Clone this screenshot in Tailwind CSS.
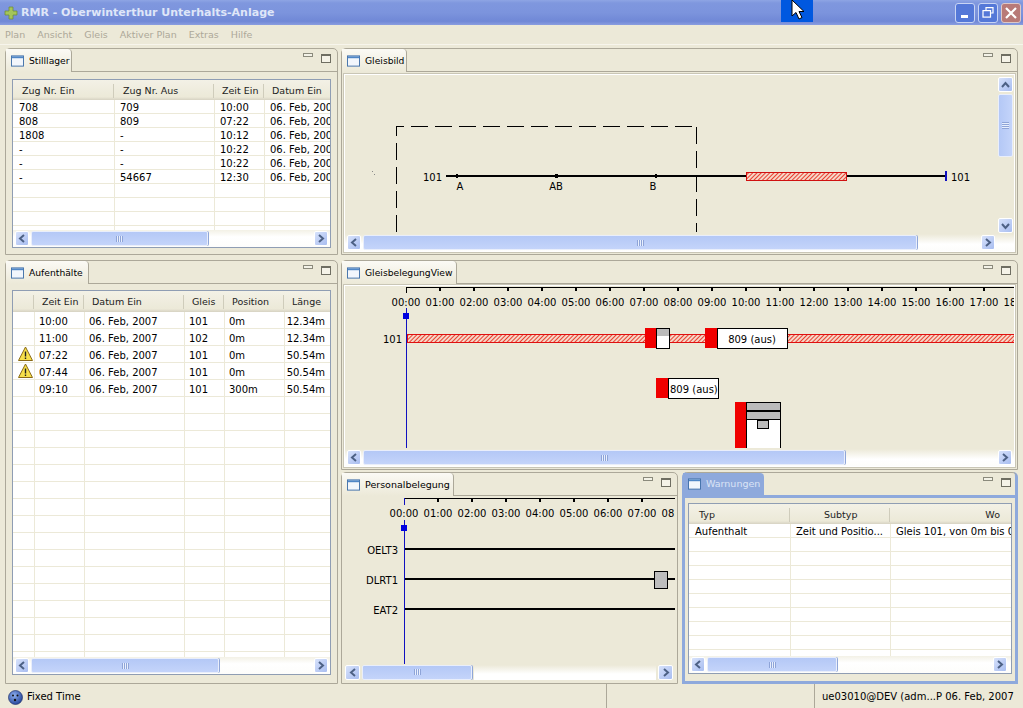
<!DOCTYPE html>
<html>
<head>
<meta charset="utf-8">
<script src="https://cdn.jsdelivr.net/npm/@tailwindcss/browser@4"></script>
</head>
<body class="m-0">
<div class="relative w-[1023px] h-[708px] overflow-hidden flex flex-col bg-[#ece9d8] text-black text-[10px] leading-[14px] font-['DejaVu_Sans',sans-serif]">

  <!-- Title bar -->
  <div class="h-[25px] shrink-0 flex items-center pl-[4px] pr-[2px] bg-[linear-gradient(180deg,#8ea5e4_0%,#7f97de_12%,#7c94dd_50%,#7088d6_85%,#8a9de0_100%)]">
    <svg class="w-[14px] h-[14px] shrink-0" viewBox="0 0 14 14"><path d="M5 1h4v4h4v4H9v4H5V9H1V5h4z" fill="#a4c45a" stroke="#6b8a30" stroke-width=".7"/></svg>
    <span class="ml-[3px] text-[11px] font-bold text-[#dfe6f8] whitespace-nowrap">RMR - Oberwinterthur Unterhalts-Anlage</span>
    <div class="ml-auto flex gap-[3px]">
      <div class="w-[20px] h-[20px] rounded-[3px] border border-[#c8d4f4] bg-[#5478d8] flex items-end pl-[5px] pb-[4px]"><div class="w-[7px] h-[3px] bg-white"></div></div>
      <div class="w-[20px] h-[20px] rounded-[3px] border border-[#c8d4f4] bg-[#5478d8]"><svg class="w-full h-full" viewBox="0 0 18 18" fill="none" stroke="#fff" stroke-width="1.2"><path d="M7 6V3.6h7V9h-2"/><rect x="4" y="6.6" width="7.5" height="6.5"/></svg></div>
      <div class="w-[20px] h-[20px] rounded-[3px] border border-[#dcc8c8] bg-[#b87a78]"><svg class="w-full h-full" viewBox="0 0 18 18" stroke="#fff" stroke-width="2.2"><path d="M4 4l10 10M14 4L4 14"/></svg></div>
    </div>
  </div>

  <!-- Menu bar -->
  <div class="h-[20px] shrink-0 flex items-center gap-[12px] pl-[5px] text-[9.5px] text-[#aca899] border-b border-[#f7f5ec]">
    <span>Plan</span><span>Ansicht</span><span>Gleis</span><span>Aktiver Plan</span><span>Extras</span><span>Hilfe</span>
  </div>

  <!-- Workbench -->
  <div class="h-[636px] shrink-0 mt-[3px] ml-[5px] flex gap-[3px]">

    <!-- Left column -->
    <div class="w-[333px] flex flex-col gap-[5px]">

      <!-- Stillager -->
      <section class="h-[207px] flex flex-col border border-[#aca899] rounded-t-[5px]">
        <div class="h-[23px] shrink-0 flex items-stretch border-b border-[#aca899]">
          <div class="w-[66px] -mb-px flex items-center gap-[5px] pl-[5px] text-[9.2px] rounded-tr-[4px] border-r border-[#aca899] bg-[linear-gradient(180deg,#fbfaf5,#ece9d8)]">
            <svg class="w-[13px] h-[14px] shrink-0" viewBox="0 0 14 14"><rect x=".5" y="1.5" width="13" height="11" fill="#f2f6fc" stroke="#3f6ea8"/><rect x="1" y="2" width="12" height="2" fill="#4f86c6"/></svg>
            <span>Stilllager</span>
          </div>
          <div class="ml-auto flex items-start gap-[8px] pt-[4px] pr-[6px]">
            <div class="w-[10px] h-[4px] border border-[#8b8a7c] bg-white/40"></div>
            <div class="w-[10px] h-[9px] mt-[1px] border border-[#6f6e62] border-t-[2px] bg-[#f5f3e8]"></div>
          </div>
        </div>
        <div class="flex-1 pt-[7px] px-[6px] pb-[6px] min-h-0">
          <div class="h-full flex flex-col border border-[#8f9db3] bg-white overflow-hidden">
            <div class="h-[20px] shrink-0 flex text-[9.5px] bg-[linear-gradient(180deg,#f3f1e6,#ece9d8_85%,#d6d2c2)] text-[#222]">
              <div class="w-[101px] pl-[9px] pt-[4px]"><span class="block border-r border-[#cfccbb] h-[14px]">Zug Nr. Ein</span></div>
              <div class="w-[100px] pl-[9px] pt-[4px]"><span class="block border-r border-[#cfccbb] h-[14px]">Zug Nr. Aus</span></div>
              <div class="w-[50px] pl-[8px] pt-[4px]"><span class="block border-r border-[#cfccbb] h-[14px] whitespace-nowrap overflow-hidden">Zeit Ein</span></div>
              <div class="flex-1 pl-[8px] pt-[4px] whitespace-nowrap overflow-hidden">Datum Ein</div>
            </div>
            <div class="flex h-[14px] shrink-0 leading-[16px] border-b border-[#ece9d8]"><div class="w-[102px] pl-[6px] border-r border-[#ece9d8]">708</div><div class="w-[100px] pl-[5px] border-r border-[#ece9d8]">709</div><div class="w-[50px] pl-[5px] border-r border-[#ece9d8]">10:00</div><div class="flex-1 pl-[5px] overflow-hidden whitespace-nowrap">06. Feb, 2007</div></div>
            <div class="flex h-[14px] shrink-0 leading-[16px] border-b border-[#ece9d8]"><div class="w-[102px] pl-[6px] border-r border-[#ece9d8]">808</div><div class="w-[100px] pl-[5px] border-r border-[#ece9d8]">809</div><div class="w-[50px] pl-[5px] border-r border-[#ece9d8]">07:22</div><div class="flex-1 pl-[5px] overflow-hidden whitespace-nowrap">06. Feb, 2007</div></div>
            <div class="flex h-[14px] shrink-0 leading-[16px] border-b border-[#ece9d8]"><div class="w-[102px] pl-[6px] border-r border-[#ece9d8]">1808</div><div class="w-[100px] pl-[5px] border-r border-[#ece9d8]">-</div><div class="w-[50px] pl-[5px] border-r border-[#ece9d8]">10:12</div><div class="flex-1 pl-[5px] overflow-hidden whitespace-nowrap">06. Feb, 2007</div></div>
            <div class="flex h-[14px] shrink-0 leading-[16px] border-b border-[#ece9d8]"><div class="w-[102px] pl-[6px] border-r border-[#ece9d8]">-</div><div class="w-[100px] pl-[5px] border-r border-[#ece9d8]">-</div><div class="w-[50px] pl-[5px] border-r border-[#ece9d8]">10:22</div><div class="flex-1 pl-[5px] overflow-hidden whitespace-nowrap">06. Feb, 2007</div></div>
            <div class="flex h-[14px] shrink-0 leading-[16px] border-b border-[#ece9d8]"><div class="w-[102px] pl-[6px] border-r border-[#ece9d8]">-</div><div class="w-[100px] pl-[5px] border-r border-[#ece9d8]">-</div><div class="w-[50px] pl-[5px] border-r border-[#ece9d8]">10:22</div><div class="flex-1 pl-[5px] overflow-hidden whitespace-nowrap">06. Feb, 2007</div></div>
            <div class="flex h-[14px] shrink-0 leading-[16px] border-b border-[#ece9d8]"><div class="w-[102px] pl-[6px] border-r border-[#ece9d8]">-</div><div class="w-[100px] pl-[5px] border-r border-[#ece9d8]">54667</div><div class="w-[50px] pl-[5px] border-r border-[#ece9d8]">12:30</div><div class="flex-1 pl-[5px] overflow-hidden whitespace-nowrap">06. Feb, 2007</div></div>
            <div class="flex-1 min-h-0 flex bg-[repeating-linear-gradient(180deg,#fff_0,#fff_13px,#ece9d8_13px,#ece9d8_14px)]"><div class="w-[102px] border-r border-[#ece9d8]"></div><div class="w-[100px] border-r border-[#ece9d8]"></div><div class="w-[50px] border-r border-[#ece9d8]"></div></div>
            <!-- scrollbar -->
            <div class="h-[17px] shrink-0 flex items-center gap-[2px] px-[2px] bg-[linear-gradient(180deg,#f3f1e6,#fff_40%,#fdfdfb)]">
              <div class="w-[14px] h-[15px] rounded-[2px] border border-white bg-[linear-gradient(135deg,#d7e2fb,#a8bdf0)] flex items-center justify-center"><svg class="w-[8px] h-[9px]" viewBox="0 0 8 9" fill="none" stroke="#4d6185" stroke-width="2"><path d="M6 1L2 4.5 6 8"/></svg></div>
              <div class="w-[177px] h-[15px] rounded-[2px] border border-[#e9eefb] bg-[linear-gradient(180deg,#b4c8f6,#c4d4fa)] shadow-[1px_0_0_#8fa6d8] flex items-center justify-center"><div class="w-[7px] h-[6px] bg-[repeating-linear-gradient(90deg,#8ea4d8_0,#8ea4d8_1px,#e8effd_1px,#e8effd_2px)]"></div></div>
              <div class="flex-1"></div>
              <div class="w-[14px] h-[15px] rounded-[2px] border border-white bg-[linear-gradient(135deg,#d7e2fb,#a8bdf0)] flex items-center justify-center"><svg class="w-[8px] h-[9px]" viewBox="0 0 8 9" fill="none" stroke="#4d6185" stroke-width="2"><path d="M2 1l4 3.5L2 8"/></svg></div>
            </div>
          </div>
        </div>
      </section>

      <!-- Aufenthalte -->
      <section class="flex-1 min-h-0 flex flex-col border border-[#aca899] rounded-t-[5px]">
        <div class="h-[23px] shrink-0 flex items-stretch border-b border-[#aca899]">
          <div class="w-[83px] -mb-px flex items-center gap-[5px] pl-[5px] text-[9.2px] rounded-tr-[4px] border-r border-[#aca899] bg-[linear-gradient(180deg,#fbfaf5,#ece9d8)]">
            <svg class="w-[13px] h-[14px] shrink-0" viewBox="0 0 14 14"><rect x=".5" y="1.5" width="13" height="11" fill="#f2f6fc" stroke="#3f6ea8"/><rect x="1" y="2" width="12" height="2" fill="#4f86c6"/></svg>
            <span>Aufenthälte</span>
          </div>
          <div class="ml-auto flex items-start gap-[8px] pt-[4px] pr-[6px]">
            <div class="w-[10px] h-[4px] border border-[#8b8a7c] bg-white/40"></div>
            <div class="w-[10px] h-[9px] mt-[1px] border border-[#6f6e62] border-t-[2px] bg-[#f5f3e8]"></div>
          </div>
        </div>
        <div class="flex-1 pt-[6px] px-[6px] pb-[8px] min-h-0">
          <div class="h-full flex flex-col border border-[#8f9db3] bg-white overflow-hidden">
            <div class="h-[21px] shrink-0 flex text-[9.5px] bg-[linear-gradient(180deg,#f3f1e6,#ece9d8_85%,#d6d2c2)] text-[#222]">
              <div class="w-[21px] pt-[4px]"><span class="block border-r border-[#cfccbb] h-[14px]"></span></div>
              <div class="w-[50px] pl-[8px] pt-[4px]"><span class="block border-r border-[#cfccbb] h-[14px] whitespace-nowrap overflow-hidden">Zeit Ein</span></div>
              <div class="w-[100px] pl-[8px] pt-[4px]"><span class="block border-r border-[#cfccbb] h-[14px]">Datum Ein</span></div>
              <div class="w-[40px] pl-[8px] pt-[4px]"><span class="block border-r border-[#cfccbb] h-[14px]">Gleis</span></div>
              <div class="w-[60px] pl-[8px] pt-[4px]"><span class="block border-r border-[#cfccbb] h-[14px]">Position</span></div>
              <div class="flex-1 pl-[8px] pt-[4px]">Länge</div>
            </div>
            <div class="flex h-[17px] shrink-0 leading-[20px] border-b border-[#ece9d8]"><div class="w-[22px] border-r border-[#ece9d8]"></div><div class="w-[50px] pl-[4px] border-r border-[#ece9d8]">10:00</div><div class="w-[100px] pl-[4px] border-r border-[#ece9d8]">06. Feb, 2007</div><div class="w-[40px] pl-[4px] border-r border-[#ece9d8]">101</div><div class="w-[60px] pl-[4px] border-r border-[#ece9d8]">0m</div><div class="flex-1 text-right pr-[5px]">12.34m</div></div>
            <div class="flex h-[17px] shrink-0 leading-[20px] border-b border-[#ece9d8]"><div class="w-[22px] border-r border-[#ece9d8]"></div><div class="w-[50px] pl-[4px] border-r border-[#ece9d8]">11:00</div><div class="w-[100px] pl-[4px] border-r border-[#ece9d8]">06. Feb, 2007</div><div class="w-[40px] pl-[4px] border-r border-[#ece9d8]">102</div><div class="w-[60px] pl-[4px] border-r border-[#ece9d8]">0m</div><div class="flex-1 text-right pr-[5px]">12.34m</div></div>
            <div class="flex h-[17px] shrink-0 leading-[20px] border-b border-[#ece9d8]"><div class="w-[22px] border-r border-[#ece9d8] pl-[4px]"><svg class="w-[17px] h-[16px]" viewBox="0 0 16 16"><path d="M8 1l7 13.5H1z" fill="#f7e04a" stroke="#8a6a18"/><path d="M8 5.5v5M8 11.5v1.6" stroke="#222" stroke-width="1.4"/></svg></div><div class="w-[50px] pl-[4px] border-r border-[#ece9d8]">07:22</div><div class="w-[100px] pl-[4px] border-r border-[#ece9d8]">06. Feb, 2007</div><div class="w-[40px] pl-[4px] border-r border-[#ece9d8]">101</div><div class="w-[60px] pl-[4px] border-r border-[#ece9d8]">0m</div><div class="flex-1 text-right pr-[5px]">50.54m</div></div>
            <div class="flex h-[17px] shrink-0 leading-[20px] border-b border-[#ece9d8]"><div class="w-[22px] border-r border-[#ece9d8] pl-[4px]"><svg class="w-[17px] h-[16px]" viewBox="0 0 16 16"><path d="M8 1l7 13.5H1z" fill="#f7e04a" stroke="#8a6a18"/><path d="M8 5.5v5M8 11.5v1.6" stroke="#222" stroke-width="1.4"/></svg></div><div class="w-[50px] pl-[4px] border-r border-[#ece9d8]">07:44</div><div class="w-[100px] pl-[4px] border-r border-[#ece9d8]">06. Feb, 2007</div><div class="w-[40px] pl-[4px] border-r border-[#ece9d8]">101</div><div class="w-[60px] pl-[4px] border-r border-[#ece9d8]">0m</div><div class="flex-1 text-right pr-[5px]">50.54m</div></div>
            <div class="flex h-[17px] shrink-0 leading-[20px] border-b border-[#ece9d8]"><div class="w-[22px] border-r border-[#ece9d8]"></div><div class="w-[50px] pl-[4px] border-r border-[#ece9d8]">09:10</div><div class="w-[100px] pl-[4px] border-r border-[#ece9d8]">06. Feb, 2007</div><div class="w-[40px] pl-[4px] border-r border-[#ece9d8]">101</div><div class="w-[60px] pl-[4px] border-r border-[#ece9d8]">300m</div><div class="flex-1 text-right pr-[5px]">50.54m</div></div>
            <div class="flex-1 min-h-0 flex bg-[repeating-linear-gradient(180deg,#fff_0,#fff_16px,#ece9d8_16px,#ece9d8_17px)]"><div class="w-[22px] border-r border-[#ece9d8]"></div><div class="w-[50px] border-r border-[#ece9d8]"></div><div class="w-[100px] border-r border-[#ece9d8]"></div><div class="w-[40px] border-r border-[#ece9d8]"></div><div class="w-[60px] border-r border-[#ece9d8]"></div></div>
            <div class="h-[17px] shrink-0 flex items-center gap-[2px] px-[2px] bg-[linear-gradient(180deg,#f3f1e6,#fff_40%,#fdfdfb)]">
              <div class="w-[14px] h-[15px] rounded-[2px] border border-white bg-[linear-gradient(135deg,#d7e2fb,#a8bdf0)] flex items-center justify-center"><svg class="w-[8px] h-[9px]" viewBox="0 0 8 9" fill="none" stroke="#4d6185" stroke-width="2"><path d="M6 1L2 4.5 6 8"/></svg></div>
              <div class="w-[188px] h-[15px] rounded-[2px] border border-[#e9eefb] bg-[linear-gradient(180deg,#b4c8f6,#c4d4fa)] shadow-[1px_0_0_#8fa6d8] flex items-center justify-center"><div class="w-[7px] h-[6px] bg-[repeating-linear-gradient(90deg,#8ea4d8_0,#8ea4d8_1px,#e8effd_1px,#e8effd_2px)]"></div></div>
              <div class="flex-1"></div>
              <div class="w-[14px] h-[15px] rounded-[2px] border border-white bg-[linear-gradient(135deg,#d7e2fb,#a8bdf0)] flex items-center justify-center"><svg class="w-[8px] h-[9px]" viewBox="0 0 8 9" fill="none" stroke="#4d6185" stroke-width="2"><path d="M2 1l4 3.5L2 8"/></svg></div>
            </div>
          </div>
        </div>
      </section>
    </div>

    <!-- Right column -->
    <div class="w-[677px] flex flex-col">

      <!-- Gleisbild -->
      <section class="h-[207px] shrink-0 flex flex-col border border-[#aca899] rounded-t-[5px]">
        <div class="h-[23px] shrink-0 flex items-stretch border-b border-[#aca899]">
          <div class="w-[65px] -mb-px flex items-center gap-[5px] pl-[5px] text-[9.2px] rounded-tr-[4px] border-r border-[#aca899] bg-[linear-gradient(180deg,#fbfaf5,#ece9d8)]">
            <svg class="w-[13px] h-[14px] shrink-0" viewBox="0 0 14 14"><rect x=".5" y="1.5" width="13" height="11" fill="#f2f6fc" stroke="#3f6ea8"/><rect x="1" y="2" width="12" height="2" fill="#4f86c6"/></svg>
            <span>Gleisbild</span>
          </div>
          <div class="ml-auto flex items-start gap-[8px] pt-[4px] pr-[6px]">
            <div class="w-[10px] h-[4px] border border-[#8b8a7c] bg-white/40"></div>
            <div class="w-[10px] h-[9px] mt-[1px] border border-[#6f6e62] border-t-[2px] bg-[#f5f3e8]"></div>
          </div>
        </div>
        <div class="flex-1 min-h-0 p-[2px]">
          <div class="h-full flex flex-col border border-white shadow-[0_0_0_1px_#c9c6b6]">
            <div class="flex-1 min-h-0 flex">
              <svg class="w-[651px] h-[159px] shrink-0" viewBox="345 75 651 159" shape-rendering="crispEdges" font-family="DejaVu Sans" font-size="10" fill="#000">
                <defs><pattern id="h1" width="3" height="3" patternUnits="userSpaceOnUse" patternTransform="rotate(45)"><rect width="3" height="3" fill="#f6d7c8"/><rect width="1" height="3" fill="#e84030"/></pattern></defs>
                <path d="M396.5 232V126.5H697M696.5 126.5V232" fill="none" stroke="#000" stroke-dasharray="17 7"/>
                <rect x="446" y="175" width="500" height="2"/>
                <rect x="746.5" y="172.5" width="100" height="8" fill="url(#h1)" stroke="#d01010"/>
                <rect x="945" y="171" width="2" height="10" fill="#1010c0"/>
                <rect x="456" y="174" width="2" height="4"/><rect x="555" y="174" width="3" height="4"/><rect x="655" y="174" width="2" height="4"/>
                <rect x="372" y="171" width="1" height="1" fill="#888"/><rect x="374" y="174" width="1" height="1" fill="#888"/>
                <text x="423" y="181">101</text><text x="951" y="181">101</text>
                <text x="460" y="190" text-anchor="middle">A</text><text x="556" y="190" text-anchor="middle">AB</text><text x="653" y="190" text-anchor="middle">B</text>
              </svg>
              <div class="w-[18px] shrink-0 flex flex-col items-center gap-[2px] pt-[2px] pb-[1px]">
                <div class="w-[15px] h-[15px] rounded-[2px] border border-white bg-[linear-gradient(135deg,#d7e2fb,#a8bdf0)] flex items-center justify-center"><svg class="w-[9px] h-[8px]" viewBox="0 0 9 8" fill="none" stroke="#4d6185" stroke-width="2"><path d="M1 6l3.5-4L8 6"/></svg></div>
                <div class="w-[15px] h-[63px] rounded-[2px] border border-[#e9eefb] bg-[linear-gradient(90deg,#b4c8f6,#c4d4fa)] flex items-center justify-center"><div class="w-[7px] h-[7px] bg-[repeating-linear-gradient(180deg,#8ea4d8_0,#8ea4d8_1px,#e8effd_1px,#e8effd_2px)]"></div></div>
                <div class="flex-1"></div>
                <div class="w-[15px] h-[15px] rounded-[2px] border border-white bg-[linear-gradient(135deg,#d7e2fb,#a8bdf0)] flex items-center justify-center"><svg class="w-[9px] h-[8px]" viewBox="0 0 9 8" fill="none" stroke="#4d6185" stroke-width="2"><path d="M1 2l3.5 4L8 2"/></svg></div>
              </div>
            </div>
            <div class="h-[17px] shrink-0 flex items-center gap-[2px] px-[2px] bg-[linear-gradient(180deg,#ece9d8,#fff_60%,#fdfdfb)]">
              <div class="w-[14px] h-[15px] rounded-[2px] border border-white bg-[linear-gradient(135deg,#d7e2fb,#a8bdf0)] flex items-center justify-center"><svg class="w-[8px] h-[9px]" viewBox="0 0 8 9" fill="none" stroke="#4d6185" stroke-width="2"><path d="M6 1L2 4.5 6 8"/></svg></div>
              <div class="w-[554px] h-[15px] rounded-[2px] border border-[#e9eefb] bg-[linear-gradient(180deg,#b4c8f6,#c4d4fa)] shadow-[1px_0_0_#8fa6d8] flex items-center justify-center"><div class="w-[7px] h-[6px] bg-[repeating-linear-gradient(90deg,#8ea4d8_0,#8ea4d8_1px,#e8effd_1px,#e8effd_2px)]"></div></div>
              <div class="flex-1"></div>
              <div class="w-[14px] h-[15px] mr-[17px] rounded-[2px] border border-white bg-[linear-gradient(135deg,#d7e2fb,#a8bdf0)] flex items-center justify-center"><svg class="w-[8px] h-[9px]" viewBox="0 0 8 9" fill="none" stroke="#4d6185" stroke-width="2"><path d="M2 1l4 3.5L2 8"/></svg></div>
            </div>
          </div>
        </div>
      </section>

      <!-- GleisbelegungView -->
      <section class="h-[210px] shrink-0 mt-[5px] flex flex-col border border-[#aca899] rounded-t-[5px]">
        <div class="h-[23px] shrink-0 flex items-stretch border-b border-[#aca899]">
          <div class="w-[115px] -mb-px flex items-center gap-[5px] pl-[5px] text-[9.2px] rounded-tr-[4px] border-r border-[#aca899] bg-[linear-gradient(180deg,#fbfaf5,#ece9d8)]">
            <svg class="w-[13px] h-[14px] shrink-0" viewBox="0 0 14 14"><rect x=".5" y="1.5" width="13" height="11" fill="#f2f6fc" stroke="#3f6ea8"/><rect x="1" y="2" width="12" height="2" fill="#4f86c6"/></svg>
            <span>GleisbelegungView</span>
          </div>
          <div class="ml-auto flex items-start gap-[8px] pt-[4px] pr-[6px]">
            <div class="w-[10px] h-[4px] border border-[#8b8a7c] bg-white/40"></div>
            <div class="w-[10px] h-[9px] mt-[1px] border border-[#6f6e62] border-t-[2px] bg-[#f5f3e8]"></div>
          </div>
        </div>
        <div class="flex-1 min-h-0 px-[2px] pt-[1px] pb-[2px]">
          <div class="h-full flex flex-col border border-white shadow-[0_0_0_1px_#c9c6b6]">
            <svg class="w-[669px] h-[163px] shrink-0" viewBox="345 286 669 163" shape-rendering="crispEdges" font-family="DejaVu Sans" font-size="10" fill="#000">
              <defs>
                <pattern id="h2" width="3" height="3" patternUnits="userSpaceOnUse" patternTransform="rotate(45)"><rect width="3" height="3" fill="#f6d7c8"/><rect width="1" height="3" fill="#e84030"/></pattern>
                <clipPath id="c2"><rect x="345" y="286" width="669" height="162"/></clipPath>
              </defs>
              <g clip-path="url(#c2)">
                <rect x="406" y="287" width="608" height="1"/>
                <path d="M440 288v3M474 288v3M508 288v3M542 288v3M576 288v3M610 288v3M644 288v3M678 288v3M712 288v3M746 288v3M780 288v3M814 288v3M848 288v3M882 288v3M916 288v3M950 288v3M984 288v3" stroke="#000" stroke-width="2"/>
                <g text-anchor="middle">
                  <text x="406" y="306">00:00</text><text x="440" y="306">01:00</text><text x="474" y="306">02:00</text><text x="508" y="306">03:00</text><text x="542" y="306">04:00</text><text x="576" y="306">05:00</text><text x="610" y="306">06:00</text><text x="644" y="306">07:00</text><text x="678" y="306">08:00</text><text x="712" y="306">09:00</text><text x="746" y="306">10:00</text><text x="780" y="306">11:00</text><text x="814" y="306">12:00</text><text x="848" y="306">13:00</text><text x="882" y="306">14:00</text><text x="916" y="306">15:00</text><text x="950" y="306">16:00</text><text x="984" y="306">17:00</text><text x="1018" y="306">18:00</text>
                </g>
                <rect x="406" y="288" width="1" height="5" fill="#000"/>
                <rect x="406" y="308" width="1" height="140" fill="#1010c0"/>
                <rect x="403" y="313" width="6" height="6" fill="#0000e0"/>
                <text x="383" y="343">101</text>
                <rect x="407.5" y="334.5" width="620" height="8" fill="url(#h2)" stroke="#e01010"/>
                <rect x="645" y="328" width="11" height="20" fill="#f00000"/>
                <rect x="656.5" y="328.5" width="13" height="20" fill="#fff" stroke="#000"/>
                <rect x="657" y="329" width="12" height="7" fill="#bbb"/>
                <rect x="705" y="328" width="12" height="20" fill="#f00000"/>
                <rect x="717.5" y="328.5" width="70" height="20" fill="#fff" stroke="#000"/>
                <text x="752" y="343" text-anchor="middle">809 (aus)</text>
                <rect x="656" y="378" width="12" height="20" fill="#f00000"/>
                <rect x="668.5" y="378.5" width="50" height="20" fill="#fff" stroke="#000"/>
                <text x="670" y="393">809 (aus)</text>
                <rect x="735" y="402" width="11" height="46" fill="#f00000"/>
                <rect x="746.5" y="402.5" width="34" height="50" fill="#fff" stroke="#000"/>
                <rect x="747" y="403" width="33" height="7" fill="#bbb"/>
                <rect x="747" y="410" width="33" height="2" fill="#000"/>
                <rect x="747" y="412" width="33" height="7" fill="#bbb"/>
                <rect x="747" y="419" width="33" height="1" fill="#000"/>
                <rect x="757.5" y="420.5" width="11" height="8" fill="#bbb" stroke="#000"/>
              </g>
            </svg>
            <div class="h-[17px] shrink-0 flex items-center gap-[2px] px-[2px] bg-[linear-gradient(180deg,#ece9d8,#fff_60%,#fdfdfb)]">
              <div class="w-[14px] h-[15px] rounded-[2px] border border-white bg-[linear-gradient(135deg,#d7e2fb,#a8bdf0)] flex items-center justify-center"><svg class="w-[8px] h-[9px]" viewBox="0 0 8 9" fill="none" stroke="#4d6185" stroke-width="2"><path d="M6 1L2 4.5 6 8"/></svg></div>
              <div class="w-[482px] h-[15px] rounded-[2px] border border-[#e9eefb] bg-[linear-gradient(180deg,#b4c8f6,#c4d4fa)] shadow-[1px_0_0_#8fa6d8] flex items-center justify-center"><div class="w-[7px] h-[6px] bg-[repeating-linear-gradient(90deg,#8ea4d8_0,#8ea4d8_1px,#e8effd_1px,#e8effd_2px)]"></div></div>
              <div class="flex-1"></div>
              <div class="w-[14px] h-[15px] rounded-[2px] border border-white bg-[linear-gradient(135deg,#d7e2fb,#a8bdf0)] flex items-center justify-center"><svg class="w-[8px] h-[9px]" viewBox="0 0 8 9" fill="none" stroke="#4d6185" stroke-width="2"><path d="M2 1l4 3.5L2 8"/></svg></div>
            </div>
          </div>
        </div>
      </section>

      <!-- Bottom row -->
      <div class="h-[212px] shrink-0 mt-[2px] flex gap-[4px]">

        <!-- Personalbelegung -->
        <section class="w-[337px] flex flex-col border border-[#aca899] rounded-t-[5px]">
          <div class="h-[23px] shrink-0 flex items-stretch border-b border-[#aca899]">
            <div class="w-[112px] -mb-px flex items-center gap-[5px] pl-[5px] text-[9.5px] rounded-tr-[4px] border-r border-[#aca899] bg-[linear-gradient(180deg,#fbfaf5,#ece9d8)]">
              <svg class="w-[13px] h-[14px] shrink-0" viewBox="0 0 14 14"><rect x=".5" y="1.5" width="13" height="11" fill="#f2f6fc" stroke="#3f6ea8"/><rect x="1" y="2" width="12" height="2" fill="#4f86c6"/></svg>
              <span>Personalbelegung</span>
            </div>
            <div class="ml-auto flex items-start gap-[8px] pt-[4px] pr-[6px]">
              <div class="w-[10px] h-[4px] border border-[#8b8a7c] bg-white/40"></div>
              <div class="w-[10px] h-[9px] mt-[1px] border border-[#6f6e62] border-t-[2px] bg-[#f5f3e8]"></div>
            </div>
          </div>
          <div class="flex-1 min-h-0 flex flex-col">
            <svg class="w-[335px] h-[168px] shrink-0" viewBox="342 496 335 168" shape-rendering="crispEdges" font-family="DejaVu Sans" font-size="10" fill="#000">
              <defs><clipPath id="c3"><rect x="342" y="496" width="333" height="168"/></clipPath></defs>
              <g clip-path="url(#c3)">
                <rect x="404" y="498" width="271" height="1"/>
                <path d="M438 499v3M472 499v3M506 499v3M540 499v3M574 499v3M608 499v3M642 499v3" stroke="#000" stroke-width="2"/>
                <g text-anchor="middle">
                  <text x="404" y="517">00:00</text><text x="438" y="517">01:00</text><text x="472" y="517">02:00</text><text x="506" y="517">03:00</text><text x="540" y="517">04:00</text><text x="574" y="517">05:00</text><text x="608" y="517">06:00</text><text x="642" y="517">07:00</text><text x="676" y="517">08:00</text>
                </g>
                <rect x="404" y="498" width="1" height="7" fill="#1010c0"/>
                <rect x="404" y="520" width="1" height="144" fill="#1010c0"/>
                <rect x="401" y="525" width="6" height="6" fill="#0000e0"/>
                <rect x="405" y="548" width="270" height="2"/><rect x="405" y="578" width="270" height="2"/><rect x="405" y="608" width="270" height="2"/>
                <g text-anchor="end"><text x="398" y="554">OELT3</text><text x="398" y="584">DLRT1</text><text x="398" y="614">EAT2</text></g>
                <rect x="654.5" y="571.5" width="13" height="17" fill="#bdbdbd" stroke="#000"/>
              </g>
            </svg>
            <div class="h-[18px] shrink-0 flex items-center gap-[2px] pl-[3px] pr-[4px] pb-[2px]">
              <div class="w-[15px] h-[15px] rounded-[2px] border border-white bg-[linear-gradient(135deg,#d7e2fb,#a8bdf0)] flex items-center justify-center"><svg class="w-[8px] h-[9px]" viewBox="0 0 8 9" fill="none" stroke="#4d6185" stroke-width="2"><path d="M6 1L2 4.5 6 8"/></svg></div>
              <div class="w-[110px] h-[15px] rounded-[2px] border border-[#e9eefb] bg-[linear-gradient(180deg,#b4c8f6,#c4d4fa)] shadow-[1px_0_0_#8fa6d8] flex items-center justify-center"><div class="w-[7px] h-[6px] bg-[repeating-linear-gradient(90deg,#8ea4d8_0,#8ea4d8_1px,#e8effd_1px,#e8effd_2px)]"></div></div>
              <div class="flex-1 h-[15px] bg-[linear-gradient(180deg,#ece9d8,#fff_60%)]"></div>
              <div class="w-[15px] h-[15px] rounded-[2px] border border-white bg-[linear-gradient(135deg,#d7e2fb,#a8bdf0)] flex items-center justify-center"><svg class="w-[8px] h-[9px]" viewBox="0 0 8 9" fill="none" stroke="#4d6185" stroke-width="2"><path d="M2 1l4 3.5L2 8"/></svg></div>
            </div>
          </div>
        </section>

        <!-- Warnungen -->
        <section class="w-[336px] flex flex-col border-[3px] border-t-0 border-[#8ea9dc] rounded-t-[5px]">
          <div class="h-[26px] shrink-0 flex items-stretch border-b-[3px] border-[#8ea9dc] border-t border-t-[#aca899] -mx-[2px] rounded-t-[5px]">
            <div class="w-[81px] flex items-center gap-[5px] pl-[5px] text-[9.5px] rounded-tr-[4px] bg-[#8ea9dc] text-[#dbe4f6]">
              <svg class="w-[13px] h-[14px] shrink-0" viewBox="0 0 14 14"><rect x=".5" y="1.5" width="13" height="11" fill="#f2f6fc" stroke="#3f6ea8"/><rect x="1" y="2" width="12" height="2" fill="#4f86c6"/></svg>
              <span>Warnungen</span>
            </div>
            <div class="ml-auto flex items-start gap-[8px] pt-[4px] pr-[6px]">
              <div class="w-[10px] h-[4px] border border-[#8b8a7c] bg-white/40"></div>
              <div class="w-[10px] h-[9px] mt-[1px] border border-[#6f6e62] border-t-[2px] bg-[#f5f3e8]"></div>
            </div>
          </div>
          <div class="flex-1 min-h-0 pt-[5px] px-[3px] pb-[7px]">
            <div class="h-full flex flex-col border border-[#8f9db3] bg-white overflow-hidden">
              <div class="h-[20px] shrink-0 flex text-[9.5px] bg-[linear-gradient(180deg,#f3f1e6,#ece9d8_85%,#d6d2c2)] text-[#222]">
                <div class="w-[101px] pl-[10px] pt-[4px]"><span class="block border-r border-[#cfccbb] h-[14px]">Typ</span></div>
                <div class="w-[100px] pl-[34px] pt-[4px]"><span class="block border-r border-[#cfccbb] h-[14px]">Subtyp</span></div>
                <div class="flex-1 pt-[4px] text-right pr-[11px]">Wo</div>
              </div>
              <div class="flex h-[14px] shrink-0 leading-[16px] border-b border-[#ece9d8]"><div class="w-[102px] pl-[6px] border-r border-[#ece9d8]">Aufenthalt</div><div class="w-[100px] pl-[5px] border-r border-[#ece9d8] whitespace-nowrap overflow-hidden">Zeit und Positio...</div><div class="flex-1 pl-[5px] whitespace-nowrap overflow-hidden">Gleis 101, von 0m bis 0m</div></div>
              <div class="flex-1 min-h-0 flex bg-[repeating-linear-gradient(180deg,#fff_0,#fff_13px,#ece9d8_13px,#ece9d8_14px)]"><div class="w-[102px] border-r border-[#ece9d8]"></div><div class="w-[100px] border-r border-[#ece9d8]"></div></div>
              <div class="h-[17px] shrink-0 flex items-center gap-[2px] px-[2px] bg-[linear-gradient(180deg,#f3f1e6,#fff_40%,#fdfdfb)]">
                <div class="w-[14px] h-[15px] rounded-[2px] border border-white bg-[linear-gradient(135deg,#d7e2fb,#a8bdf0)] flex items-center justify-center"><svg class="w-[8px] h-[9px]" viewBox="0 0 8 9" fill="none" stroke="#4d6185" stroke-width="2"><path d="M6 1L2 4.5 6 8"/></svg></div>
                <div class="w-[130px] h-[15px] rounded-[2px] border border-[#e9eefb] bg-[linear-gradient(180deg,#b4c8f6,#c4d4fa)] shadow-[1px_0_0_#8fa6d8] flex items-center justify-center"><div class="w-[7px] h-[6px] bg-[repeating-linear-gradient(90deg,#8ea4d8_0,#8ea4d8_1px,#e8effd_1px,#e8effd_2px)]"></div></div>
                <div class="flex-1"></div>
                <div class="w-[14px] h-[15px] mr-[2px] rounded-[2px] border border-white bg-[linear-gradient(135deg,#d7e2fb,#a8bdf0)] flex items-center justify-center"><svg class="w-[8px] h-[9px]" viewBox="0 0 8 9" fill="none" stroke="#4d6185" stroke-width="2"><path d="M2 1l4 3.5L2 8"/></svg></div>
              </div>
            </div>
          </div>
        </section>
      </div>
    </div>
  </div>

  <!-- Status bar -->
  <div class="flex-1 flex items-center">
    <div class="w-[606px] h-full flex items-center pl-[8px] gap-[4px] pt-[2px]">
      <svg class="w-[15px] h-[15px] shrink-0" viewBox="0 0 15 15"><defs><radialGradient id="st" cx=".4" cy=".35" r=".7"><stop offset="0" stop-color="#8fb0f0"/><stop offset="1" stop-color="#1f3f95"/></radialGradient></defs><circle cx="7.5" cy="7.5" r="7" fill="url(#st)" stroke="#24346c" stroke-width=".7"/><circle cx="5" cy="5.5" r="1" fill="#111"/><circle cx="9.5" cy="5.5" r="1" fill="#111"/><circle cx="7" cy="10" r="1.2" fill="#111"/></svg>
      <span>Fixed Time</span>
    </div>
    <div class="w-[208px] h-full border-l border-[#aca899]"></div>
    <div class="flex-1 h-full border-l border-[#aca899] pl-[7px] pt-[2px] flex items-center whitespace-nowrap">ue03010@DEV (adm...P 06. Feb, 2007</div>
  </div>

  <!-- Mouse pointer, over the title bar -->
  <div class="absolute left-[781px] top-0 w-[32px] h-[22px] bg-[#0058e0]">
    <svg class="absolute left-[10px] top-0 w-[14px] h-[22px]" viewBox="0 0 14 22"><path d="M1 0l0 16 4-3.5 3 6.5 3-1.5-3-6h5z" fill="#fff" stroke="#000" stroke-width="1"/></svg>
  </div>
</div>
</body>
</html>
